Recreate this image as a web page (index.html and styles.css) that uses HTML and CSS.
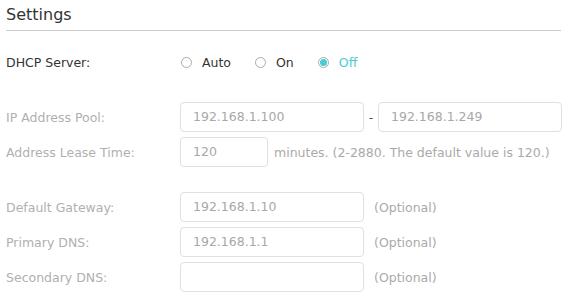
FILE: index.html
```html
<!DOCTYPE html>
<html>
<head>
<meta charset="utf-8">
<link rel="stylesheet" href="styles.css">
</head>
<body>
<div class="page">
  <h2 class="title">Settings</h2>
  <div class="row dhcp">
    <div class="label strong">DHCP Server:</div>
    <div class="field radios">
      <label class="radio"><span class="circle"></span><span class="rtext">Auto</span></label>
      <label class="radio"><span class="circle"></span><span class="rtext">On</span></label>
      <label class="radio checked"><span class="circle"><span class="dot"></span></span><span class="rtext">Off</span></label>
    </div>
  </div>
  <div class="group">
    <div class="row">
      <div class="label">IP Address Pool:</div>
      <div class="field">
        <div class="input wide">192.168.1.100</div>
        <span class="dash">-</span>
        <div class="input wide">192.168.1.249</div>
      </div>
    </div>
    <div class="row">
      <div class="label">Address Lease Time:</div>
      <div class="field">
        <div class="input short">120</div>
        <span class="hint near">minutes. (2-2880. The default value is 120.)</span>
      </div>
    </div>
  </div>
  <div class="group second">
    <div class="row">
      <div class="label">Default Gateway:</div>
      <div class="field">
        <div class="input wide">192.168.1.10</div>
        <span class="hint">(Optional)</span>
      </div>
    </div>
    <div class="row">
      <div class="label">Primary DNS:</div>
      <div class="field">
        <div class="input wide">192.168.1.1</div>
        <span class="hint">(Optional)</span>
      </div>
    </div>
    <div class="row">
      <div class="label">Secondary DNS:</div>
      <div class="field">
        <div class="input wide"></div>
        <span class="hint">(Optional)</span>
      </div>
    </div>
  </div>
</div>
</body>
</html>
```
FILE: styles.css
```css
html, body {
  margin: 0;
  padding: 0;
  background: #fff;
}
body {
  font-family: "DejaVu Sans", Verdana, sans-serif;
  font-size: 12.5px;
  color: #333;
}
.page {
  padding: 0 1px 0 6px;
}
.title {
  margin: 0;
  font-size: 16px;
  font-weight: normal;
  color: #333;
  height: 30px;
  line-height: 29px;
  border-bottom: 1px solid #ccc;
}
.row {
  display: flex;
  align-items: center;
  height: 30px;
}
.dhcp {
  margin-top: 16px;
}
.label {
  width: 174px;
  flex: none;
  color: #b0b0b0;
}
.label.strong {
  color: #333;
}
.field {
  display: flex;
  align-items: center;
}
.radios {
  padding-left: 1px;
}
.radio {
  display: flex;
  align-items: center;
  margin-right: 24px;
}
.circle {
  width: 11px;
  height: 11px;
  box-sizing: border-box;
  border: 1px solid #aaa;
  border-radius: 50%;
  display: flex;
  align-items: center;
  justify-content: center;
  margin-right: 10px;
}
.dot {
  width: 7px;
  height: 7px;
  border-radius: 50%;
  background: #4acbd6;
}
.rtext {
  color: #333;
}
.checked .rtext {
  color: #4acbd6;
}
.group {
  margin-top: 25px;
  display: flex;
  flex-direction: column;
  gap: 5px;
}
.group.second {
  margin-top: 25px;
}
.input {
  box-sizing: border-box;
  height: 30px;
  border: 1px solid #e0e0e0;
  border-radius: 4px;
  padding: 0 12px;
  line-height: 28px;
  color: #a8a8a8;
}
.input.wide {
  width: 184px;
}
.input.short {
  width: 88px;
}
.dash {
  width: 14px;
  text-align: center;
  color: #555;
}
.hint {
  color: #aaa;
  margin-left: 10px;
}
.hint.near {
  margin-left: 6px;
}
```
